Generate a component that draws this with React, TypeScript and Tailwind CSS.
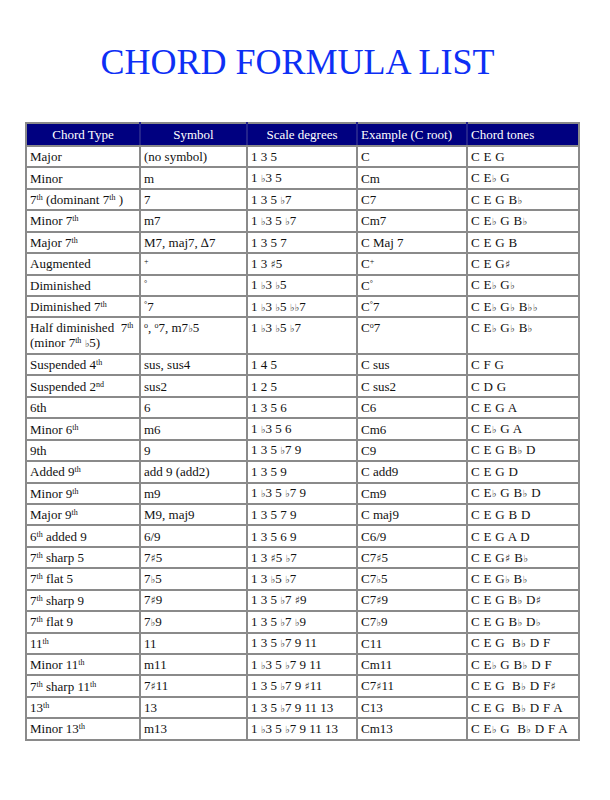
type Row = [string, string, string, string, string]

const rows: Row[] = [
  ["Major", "(no symbol)", "1 3 5", "C", "C E G"],
  ["Minor", "m", "1 ♭3 5", "Cm", "C E♭ G"],
  ["7^th (dominant 7^th )", "7", "1 3 5 ♭7", "C7", "C E G B♭"],
  ["Minor 7^th", "m7", "1 ♭3 5 ♭7", "Cm7", "C E♭ G B♭"],
  ["Major 7^th", "M7, maj7, ∆7", "1 3 5 7", "C Maj 7", "C E G B"],
  ["Augmented", "^+", "1 3 ♯5", "C^+", "C E G♯"],
  ["Diminished", "^°", "1 ♭3 ♭5", "C^°", "C E♭ G♭"],
  ["Diminished 7^th", "^°7", "1 ♭3 ♭5 ♭♭7", "C^°7", "C E♭ G♭ B♭♭"],
  ["Half diminished  7^th\n(minor 7^th ♭5)", "^o, ^o7, m7♭5", "1 ♭3 ♭5 ♭7", "C^o7", "C E♭ G♭ B♭"],
  ["Suspended 4^th", "sus, sus4", "1 4 5", "C sus", "C F G"],
  ["Suspended 2^nd", "sus2", "1 2 5", "C sus2", "C D G"],
  ["6th", "6", "1 3 5 6", "C6", "C E G A"],
  ["Minor 6^th", "m6", "1 ♭3 5 6", "Cm6", "C E♭ G A"],
  ["9th", "9", "1 3 5 ♭7 9", "C9", "C E G B♭ D"],
  ["Added 9^th", "add 9 (add2)", "1 3 5 9", "C add9", "C E G D"],
  ["Minor 9^th", "m9", "1 ♭3 5 ♭7 9", "Cm9", "C E♭ G B♭ D"],
  ["Major 9^th", "M9, maj9", "1 3 5 7 9", "C maj9", "C E G B D"],
  ["6^th added 9", "6/9", "1 3 5 6 9", "C6/9", "C E G A D"],
  ["7^th sharp 5", "7♯5", "1 3 ♯5 ♭7", "C7♯5", "C E G♯ B♭"],
  ["7^th flat 5", "7♭5", "1 3 ♭5 ♭7", "C7♭5", "C E G♭ B♭"],
  ["7^th sharp 9", "7♯9", "1 3 5 ♭7 ♯9", "C7♯9", "C E G B♭ D♯"],
  ["7^th flat 9", "7♭9", "1 3 5 ♭7 ♭9", "C7♭9", "C E G B♭ D♭"],
  ["11^th", "11", "1 3 5 ♭7 9 11", "C11", "C E G  B♭ D F"],
  ["Minor 11^th", "m11", "1 ♭3 5 ♭7 9 11", "Cm11", "C E♭ G B♭ D F"],
  ["7^th sharp 11^th", "7♯11", "1 3 5 ♭7 9 ♯11", "C7♯11", "C E G  B♭ D F♯"],
  ["13^th", "13", "1 3 5 ♭7 9 11 13", "C13", "C E G  B♭ D F A"],
  ["Minor 13^th", "m13", "1 ♭3 5 ♭7 9 11 13", "Cm13", "C E♭ G  B♭ D F A"],
]

// ^xx = superscript, ♭ / ♯ drawn a bit smaller like the printed sheet
function fmt(s: string) {
  return s.split(/(\^[a-z+°o]+|♭|♯)/).map((p, i) => {
    if (p.startsWith("^")) {
      return (
        <sup key={i} className="text-[8px]">
          {p.slice(1)}
        </sup>
      )
    }
    if (p === "♭") {
      return (
        <span key={i} className="text-[10px] text-[#333] font-['DejaVu_Sans',sans-serif]">
          ♭
        </span>
      )
    }
    if (p === "♯") {
      return (
        <span key={i} className="text-[11px] text-[#333] font-['DejaVu_Sans',sans-serif]">
          ♯
        </span>
      )
    }
    return p
  })
}

export default function App() {
  return (
    <div className="w-[610px] h-[800px] bg-white font-['Liberation_Serif',serif] text-[#111]">
      <div className="pt-[44px] flex justify-center">
        <h1 className="text-[36px] leading-none text-[#0d2ff5] mr-[15px]">CHORD FORMULA LIST</h1>
      </div>

      <div className="ml-[25px] mt-[42px]">
        <table className="w-[553px] table-fixed border-collapse text-[13px] leading-[15px]">
          <colgroup>
            <col className="w-[114px]" />
            <col className="w-[107px]" />
            <col className="w-[110px]" />
            <col className="w-[110px]" />
            <col className="w-[112px]" />
          </colgroup>
          <thead>
            <tr className="h-[23px] bg-[#000080] text-white text-[13px]">
              <th className="font-normal text-center border-2 border-[#8a8a8a] border-r-[#24248c]">Chord Type</th>
              <th className="font-normal text-center border-2 border-[#8a8a8a] border-x-[#24248c]">Symbol</th>
              <th className="font-normal text-center border-2 border-[#8a8a8a] border-x-[#24248c]">Scale degrees</th>
              <th className="font-normal text-left pl-[3px] border-2 border-[#8a8a8a] border-x-[#24248c]">Example (C root)</th>
              <th className="font-normal text-left pl-[3px] border-2 border-[#8a8a8a] border-l-[#24248c]">Chord tones</th>
            </tr>
          </thead>
          <tbody>
            {rows.map((r, i) => {
              const tall = r[0].includes("\n")
              return (
                <tr key={i} className={tall ? "h-[36.7px]" : "h-[21.43px]"}>
                  {r.map((c, j) => (
                    <td
                      key={j}
                      className={`border-2 border-[#8a8a8a] px-[3px] whitespace-pre ${tall ? "align-top pt-[2px]" : "align-middle"} ${j === 4 ? "tracking-[0.3px]" : ""}`}
                    >
                      {fmt(c)}
                    </td>
                  ))}
                </tr>
              )
            })}
          </tbody>
        </table>
      </div>
    </div>
  )
}
